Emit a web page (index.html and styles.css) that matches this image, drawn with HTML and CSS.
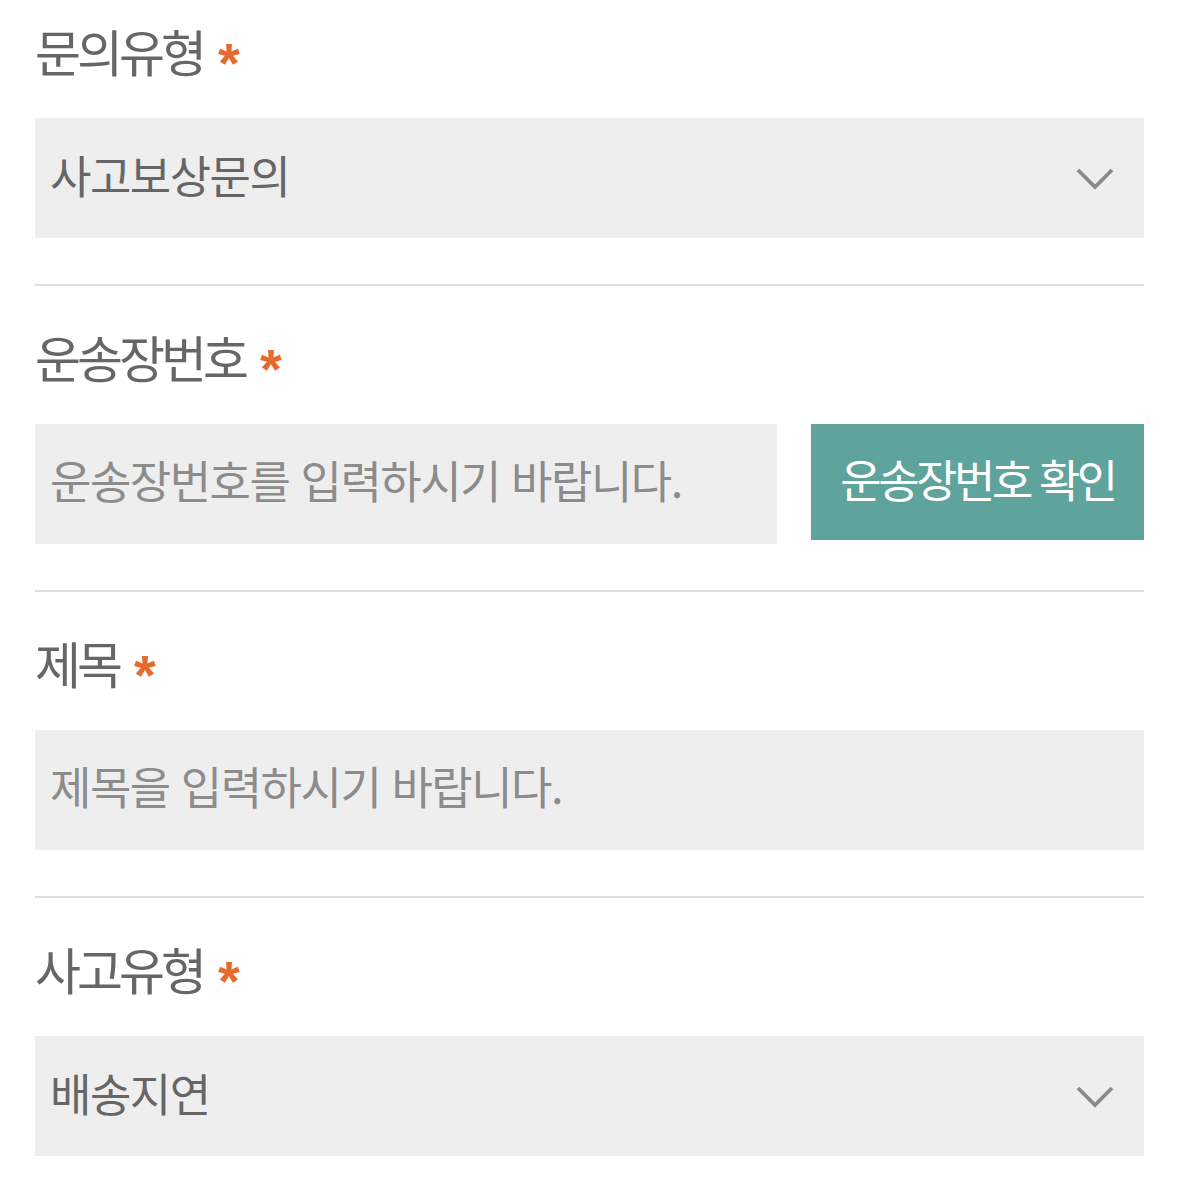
FILE: index.html
```html
<!DOCTYPE html>
<html lang="ko">
<head>
<meta charset="utf-8">
<link rel="stylesheet" href="styles.css">
</head>
<body>
<form class="form">
  <section class="row row-first">
    <div class="label">문의유형<span class="req">*</span></div>
    <div class="field select">
      <span class="value">사고보상문의</span>
      <svg class="chev" width="38" height="24" viewBox="0 0 38 24"><path d="M2 3 L19 20 L36 3" fill="none" stroke="#8a8a8a" stroke-width="3.8"/></svg>
    </div>
  </section>
  <section class="row">
    <div class="label">운송장번호<span class="req">*</span></div>
    <div class="inline">
      <div class="field input grow"><span class="ph">운송장번호를 입력하시기 바랍니다.</span></div>
      <button type="button" class="btn">운송장번호 확인</button>
    </div>
  </section>
  <section class="row">
    <div class="label">제목<span class="req">*</span></div>
    <div class="field input"><span class="ph">제목을 입력하시기 바랍니다.</span></div>
  </section>
  <section class="row row-last">
    <div class="label">사고유형<span class="req">*</span></div>
    <div class="field select">
      <span class="value">배송지연</span>
      <svg class="chev" width="38" height="24" viewBox="0 0 38 24"><path d="M2 3 L19 20 L36 3" fill="none" stroke="#8a8a8a" stroke-width="3.8"/></svg>
    </div>
  </section>
</form>
</body>
</html>
```
FILE: styles.css
```css
html, body {
  margin: 0;
  padding: 0;
  background: #fff;
}
body {
  font-family: "Noto Sans CJK KR", "Noto Sans", sans-serif;
  color: #666;
}
.form {
  padding: 0 35px;
}
.row {
  padding: 20px 0 46px;
  border-bottom: 2px solid #dedede;
}
.row-first {
  padding-top: 0;
}
.row-last {
  border-bottom: none;
}
.label {
  font-size: 50px;
  line-height: 100px;
  height: 100px;
  margin-bottom: 18px;
  letter-spacing: -4px;
  color: #666;
  display: flex;
  align-items: center;
}
.req {
  display: inline-block;
  color: #e8692c;
  font-family: "Liberation Sans", sans-serif;
  font-size: 56px;
  font-weight: bold;
  letter-spacing: 0;
  line-height: 1;
  margin-left: 15px;
  margin-top: 26px;
}
.field {
  background: #efeeef;
  height: 120px;
  box-sizing: border-box;
  padding: 0 15px 10px;
  display: flex;
  align-items: center;
}
.select {
  justify-content: space-between;
  padding-right: 30px;
  padding-bottom: 0;
}
.select .value {
  margin-bottom: 8px;
}
.value {
  font-size: 45px;
  letter-spacing: -1.5px;
  color: #666;
}
.ph {
  font-size: 45px;
  letter-spacing: -1.5px;
  color: #8c8c8c;
}
.inline {
  display: flex;
  gap: 34px;
  align-items: flex-start;
}
.grow {
  flex: 1;
}
.btn {
  width: 333px;
  height: 116px;
  border: none;
  background: #5fa49c;
  color: #fff;
  font-family: "Noto Sans CJK KR", "Noto Sans", sans-serif;
  font-size: 45px;
  letter-spacing: -3.5px;
  padding: 0 0 8px;
  flex: none;
}
.chev {
  display: block;
  margin-top: 2px;
}
```
